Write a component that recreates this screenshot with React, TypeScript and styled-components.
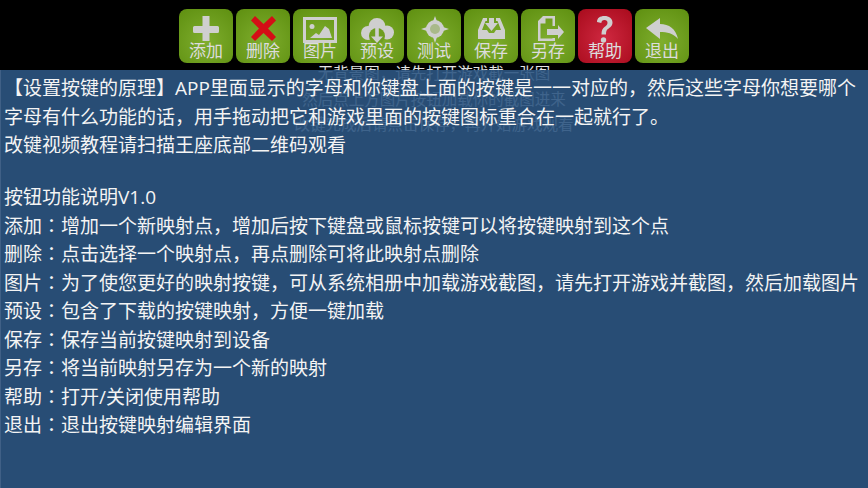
import React from 'react';
import styled, {createGlobalStyle} from 'styled-components';

const GlobalStyle = createGlobalStyle`
	html, body {
		margin: 0;
		padding: 0;
		background: #000;
	}
`;

const Stage = styled.div`
	position: relative;
	width: 868px;
	height: 488px;
	overflow: hidden;
	background: #000;
	font-family: 'Open Sans', 'Noto Sans CJK SC', sans-serif;
`;

const Toolbar = styled.div`
	display: flex;
	justify-content: center;
	gap: 3px;
	height: 70px;
	padding-top: 9px;
	box-sizing: border-box;
`;

const ToolButton = styled.div<{$danger?: boolean}>`
	width: 54px;
	height: 54px;
	box-sizing: border-box;
	padding-top: 2px;
	border-radius: 8px;
	display: flex;
	flex-direction: column;
	align-items: center;
	background: ${(p) =>
		p.$danger
			? 'radial-gradient(circle at 50% 55%, #cf2840 0%, #a80b1c 100%)'
			: 'radial-gradient(circle at 50% 60%, #7fae2e 0%, #5e8f10 100%)'};
`;

const IconSlot = styled.svg`
	width: 34px;
	height: 30px;
	flex: none;
	display: block;
	overflow: visible;
`;

const ToolLabel = styled.span`
	margin-top: 1px;
	font-size: 17px;
	line-height: 17px;
	color: #dcdcdc;
	white-space: nowrap;
`;

const HintText = styled.div`
	position: absolute;
	top: 61px;
	left: 0;
	right: 0;
	text-align: center;
	color: #e4e4e4;
	font-size: 15.5px;
	line-height: 25.5px;
`;

const Panel = styled.div`
	position: absolute;
	top: 70px;
	left: 0;
	right: 0;
	bottom: 0;
	box-sizing: border-box;
	padding: 4px 4px 0;
	background: rgba(44, 85, 130, 0.9);
	border-left: 1px solid rgba(80, 110, 145, 0.6);
	color: #f4f4f4;
	font-size: 19px;
	line-height: 28.5px;
`;

const Line = styled.div`
	height: 28.5px;
	margin-left: -1px;
	white-space: nowrap;
`;

const Gap = styled.div`
	height: 23.5px;
`;

const Colon = styled.span`
	font-family: 'Noto Sans CJK TC', sans-serif;
	line-height: 0;
`;

const grey = '#cfcfcf';
const green = '#6f9e20';

const icons: Record<string, React.ReactNode> = {
	add: (
		<path
			fill={grey}
			d="M13.500 5h7v10h8a1.500 1.500 0 0 1 1.500 1.500v4a1.500 1.500 0 0 1-1.500 1.500h-8v8h-7v-8h-8A1.500 1.500 0 0 1 4 20.500v-4A1.500 1.500 0 0 1 5.500 15h8z"
		/>
	),
	del: <path fill="#d40e16" d="M9 5l8.500 8L26 5l4 4.500-8 8L30 26l-4 4-8.500-8L9 30l-4-4 8-8.500-8-8z" />,
	pic: (
		<g>
			<path fill={grey} fillRule="evenodd" d="M0 6h34v26H0zM3 9v20h28V9z" />
			<circle cx="9" cy="15.500" r="2.500" fill={grey} />
			<path fill={grey} d="M7 27l6-5 3 2 6-9 4 3 3 9z" />
		</g>
	),
	preset: (
		<g>
			<circle cx="8" cy="22" r="7" fill={grey} />
			<circle cx="17" cy="15.500" r="8.500" fill={grey} />
			<circle cx="27" cy="21.500" r="7" fill={grey} />
			<circle cx="17" cy="25" r="8" fill={green} />
			<path fill={grey} d="M15.200 17h3.600v8.500H23L17 32l-6-6.500h4.200z" />
		</g>
	),
	test: (
		<g>
			<path fill={grey} d="M18 5l3.500 9.500L32 18l-10.500 3.500L18 32l-3.500-10.500L4 18l10.500-3.500z" />
			<circle cx="18" cy="18" r="9" fill={grey} />
			<circle cx="18" cy="18" r="5" fill="#a9b98a" />
		</g>
	),
	save: (
		<g>
			<path
				fill={grey}
				d="M9 7h4v3h-1.500L8 19h5l2 3h5l2-3h5l-3.500-9H22V7h4l5 12v9H4v-9z"
			/>
			<path fill={grey} d="M15 7h5v5h4l-6.500 8L11 12h4z" />
		</g>
	),
	saveAs: (
		<g>
			<path
				fill={grey}
				fillRule="evenodd"
				d="M7 10l5-5h12v10h-2.500V7.500H14.500V12.500H9.500v15h12V27H24v3H7z"
			/>
			<path fill={grey} d="M16 18h11v-4l6 7-6 7v-4H16z" />
		</g>
	),
	help: (
		<g>
			<path
				fill={grey}
				d="M9 11C9 7 12 5 16.500 5 21 5 24.500 7.500 24.500 11.500c0 3.500-2.500 5-4.500 6.500-1.500 1-2 2.500-2 5.500h-4.500c0-4 1-6 3-7.500 2-1.500 3-2.500 3-4.300 0-1.700-1.200-2.700-3-2.700-2 0-3 1-3.200 3z"
			/>
			<circle cx="15.500" cy="29" r="2.700" fill={grey} />
		</g>
	),
	exit: <path fill={grey} d="M1 17L15 7v6c9 0 16 5 18 15-5-6-11-7-18-7v7z" />,
};

const buttons = [
	{icon: 'add', label: '添加'},
	{icon: 'del', label: '删除'},
	{icon: 'pic', label: '图片'},
	{icon: 'preset', label: '预设'},
	{icon: 'test', label: '测试'},
	{icon: 'save', label: '保存'},
	{icon: 'saveAs', label: '另存'},
	{icon: 'help', label: '帮助', danger: true},
	{icon: 'exit', label: '退出'},
];

const intro = [
	'【设置按键的原理】APP里面显示的字母和你键盘上面的按键是一一对应的，然后这些字母你想要哪个',
	'字母有什么功能的话，用手拖动把它和游戏里面的按键图标重合在一起就行了。',
	'改键视频教程请扫描王座底部二维码观看',
];

const features = [
	['添加', '增加一个新映射点，增加后按下键盘或鼠标按键可以将按键映射到这个点'],
	['删除', '点击选择一个映射点，再点删除可将此映射点删除'],
	['图片', '为了使您更好的映射按键，可从系统相册中加载游戏截图，请先打开游戏并截图，然后加载图片'],
	['预设', '包含了下载的按键映射，方便一键加载'],
	['保存', '保存当前按键映射到设备'],
	['另存', '将当前映射另存为一个新的映射'],
	['帮助', '打开/关闭使用帮助'],
	['退出', '退出按键映射编辑界面'],
];

const App = () => (
	<Stage>
		<GlobalStyle />
		<Toolbar>
			{buttons.map((b) => (
				<ToolButton key={b.icon} $danger={b.danger}>
					<IconSlot viewBox="0 0 34 30">{icons[b.icon]}</IconSlot>
					<ToolLabel>{b.label}</ToolLabel>
				</ToolButton>
			))}
		</Toolbar>
		<HintText>
			<div>无背景图，请先打开游戏截一张图</div>
			<div>然后点上方图片按钮加载你的截图进来</div>
			<div>改键完成后请点击保存，再开始游戏观看</div>
		</HintText>
		<Panel>
			{intro.map((text) => (
				<Line key={text}>{text}</Line>
			))}
			<Gap />
			<Line>按钮功能说明V1.0</Line>
			{features.map(([name, text]) => (
				<Line key={name}>
					{name}
					<Colon>：</Colon>
					{text}
				</Line>
			))}
		</Panel>
	</Stage>
);

export default App;
